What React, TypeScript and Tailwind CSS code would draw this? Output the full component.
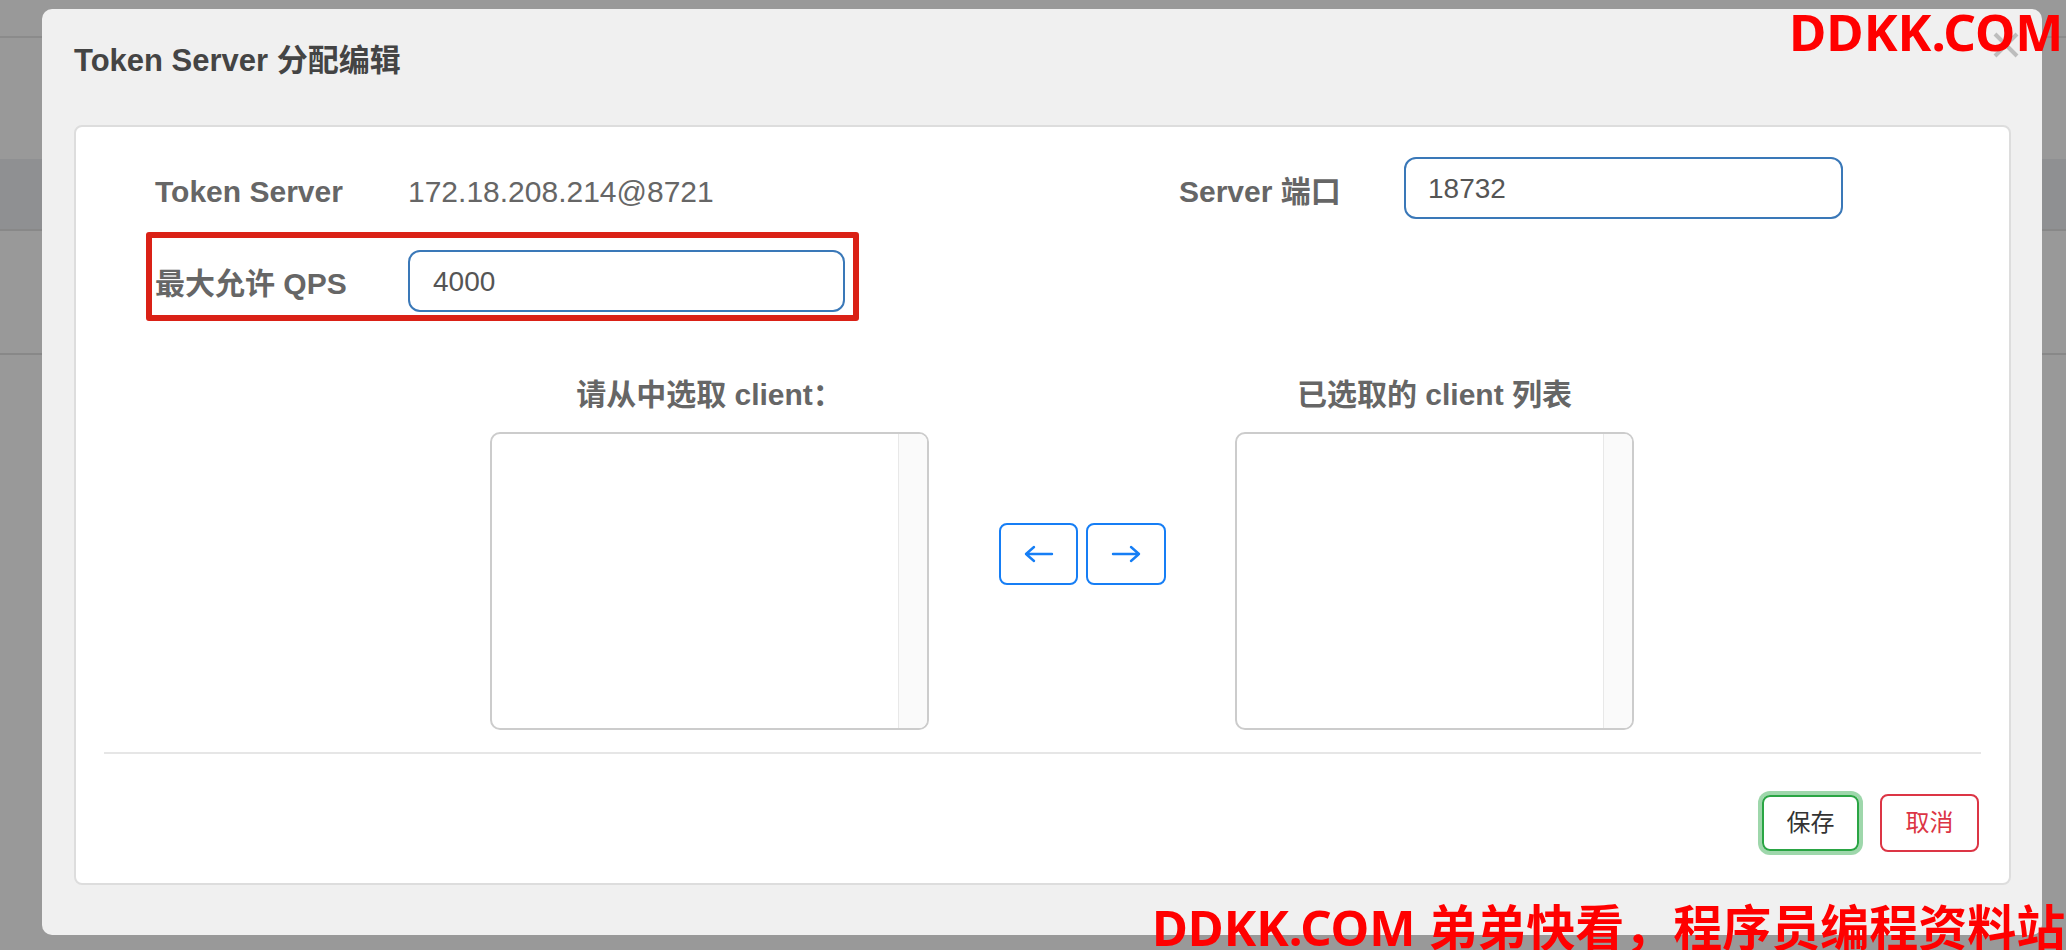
import React from 'react';

const FONT = "font-['Liberation_Sans','Noto_Sans_CJK_SC',sans-serif]";

const ClientList: React.FC<{ title: string; width: string }> = ({ title, width }) => (
    <div className={`flex flex-col ${width}`}>
        <div className="text-center text-[30px] leading-[36px] font-bold text-[#666]">{title}</div>
        <div className="mt-[19px] flex h-[298px] overflow-hidden rounded-[10px] border-2 border-[#cccccc] bg-white">
            <div className="flex-1" />
            <div className="w-[29px] border-l border-[#e8e8e8] bg-[#fafafa]" />
        </div>
    </div>
);

const Arrow: React.FC<{ dir: 'left' | 'right' }> = ({ dir }) => (
    <svg viewBox="0 0 30 18" className="h-[18px] w-[30px]" fill="none" stroke="#167ef5" strokeWidth="2.4" strokeLinecap="round" strokeLinejoin="round">
        {dir === 'left' ? <path d="M2 9 H28 M10 2 L2 9 L10 16" /> : <path d="M2 9 H28 M20 2 L28 9 L20 16" />}
    </svg>
);

const App: React.FC = () => {
    return (
        <div className={`relative h-[950px] w-[2066px] overflow-hidden bg-[#999999] ${FONT}`}>
            {/* page behind the dialog */}
            <div className="h-[36px]" />
            <div className="h-[2px] bg-[#8b8b8b]" />
            <div className="h-[121px]" />
            <div className="h-[70px] bg-[#8f9092]" />
            <div className="h-[2px] bg-[#888888]" />
            <div className="h-[122px]" />
            <div className="h-[2px] bg-[#888888]" />

            {/* dialog */}
            <div className="absolute left-[42px] top-[9px] h-[926px] w-[2000px] rounded-[10px] bg-[#f0f0f0] pl-[32px] pt-[34px]">
                <h4 className="text-[31px] leading-[36px] font-bold text-[#444]">Token Server 分配编辑</h4>
                <button className="absolute left-[1951px] top-[23px] h-[26px] w-[26px]" aria-label="close">
                    <svg viewBox="0 0 26 26" className="h-[26px] w-[26px]">
                        <path d="M2 2 L24 24 M24 2 L2 24" stroke="#bdbdbd" strokeWidth="4" />
                    </svg>
                </button>

                <div className="relative mt-[46px] h-[760px] w-[1937px] rounded-[8px] border-2 border-[#dddddd] bg-white">
                    {/* row 1 */}
                    <div className="mt-[30px] flex h-[62px] items-center pl-[79px]">
                        <div className="w-[253px] pt-[7px] text-[30px] leading-[36px] font-bold text-[#666]">Token Server</div>
                        <div className="w-[771px] pt-[7px] text-[30px] leading-[36px] text-[#666]">172.18.208.214@8721</div>
                        <div className="w-[225px] pt-[7px] text-[30px] leading-[36px] font-bold text-[#666]">Server 端口</div>
                        <input
                            readOnly
                            value="18732"
                            className="h-[62px] w-[439px] rounded-[12px] border-2 border-[#3a78b8] px-[22px] pt-[2px] text-[28px] text-[#555] outline-none"
                        />
                    </div>

                    {/* row 2 */}
                    <div className="mt-[31px] flex h-[62px] items-center pl-[79px]">
                        <div className="w-[253px] pt-[6px] text-[30px] leading-[36px] font-bold text-[#666]">最大允许 QPS</div>
                        <input
                            readOnly
                            value="4000"
                            className="h-[62px] w-[437px] rounded-[12px] border-2 border-[#3a78b8] px-[23px] pt-[2px] text-[28px] text-[#555] outline-none"
                        />
                    </div>
                    <div className="absolute left-[70px] top-[105px] h-[89px] w-[713px] rounded-[3px] border-[6px] border-[#da2116]" />

                    {/* client transfer */}
                    <div className="mt-[65px] flex items-start pl-[414px]">
                        <ClientList title="请从中选取 client：" width="w-[439px]" />
                        <div className="ml-[70px] flex gap-[8px] pt-[146px]">
                            <button className="flex h-[62px] w-[79px] items-center justify-center rounded-[8px] border-2 border-[#167ef5]">
                                <Arrow dir="left" />
                            </button>
                            <button className="flex h-[62px] w-[80px] items-center justify-center rounded-[8px] border-2 border-[#167ef5]">
                                <Arrow dir="right" />
                            </button>
                        </div>
                        <div className="ml-[69px]">
                            <ClientList title="已选取的 client 列表" width="w-[399px]" />
                        </div>
                    </div>

                    <div className="mx-[28px] mt-[22px] h-[2px] bg-[#e6e6e6]" />

                    <div className="mt-[40px] flex items-center justify-end gap-[21px] pr-[30px]">
                        <button className="h-[56px] w-[97px] rounded-[8px] border-2 border-[#2aa544] text-[24px] text-[#333] shadow-[0_0_0_4px_rgba(40,167,69,0.45)]">保存</button>
                        <button className="h-[58px] w-[99px] rounded-[8px] border-2 border-[#dc3545] text-[24px] text-[#dc3545]">取消</button>
                    </div>
                </div>
            </div>

            {/* watermarks */}
            <div className="absolute left-[1789px] top-[6px] whitespace-nowrap font-['Noto_Sans','Noto_Sans_CJK_SC',sans-serif] text-[51px] leading-[50px] font-bold text-[#ff0000]">
                DDKK.COM
            </div>
            <div className="absolute left-[1152px] top-[902px] whitespace-nowrap font-['Noto_Sans','Noto_Sans_CJK_SC',sans-serif] text-[49px] leading-[50px] font-bold text-[#ff0000]">
                DDKK.COM 弟弟快看，程序员编程资料站
            </div>
        </div>
    );
};

export default App;
